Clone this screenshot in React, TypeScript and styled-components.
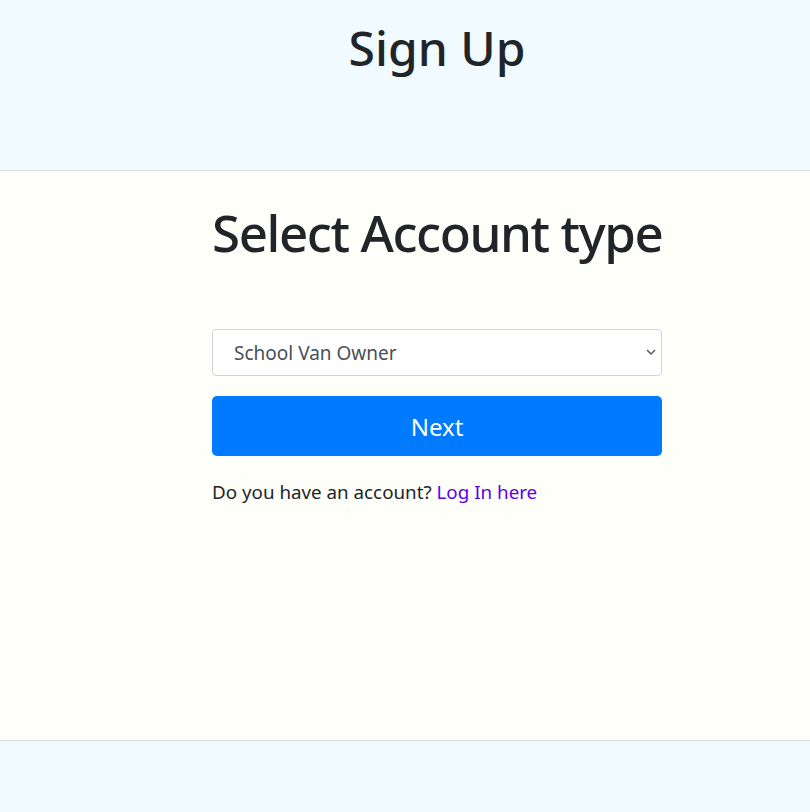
import React from "react";
import styled, { createGlobalStyle } from "styled-components";

const Global = createGlobalStyle`
  html, body { margin: 0; padding: 0; }
  body {
    font-family: "Noto Sans", "Open Sans", "Liberation Sans", sans-serif;
    color: #212529;
    background: #fffffa;
  }
`;

const Page = styled.div`
  display: flex;
  flex-direction: column;
  min-height: 812px;
`;

const Header = styled.header`
  height: 170px;
  background: #f0faff;
  border-bottom: 1px solid #dcdcdc;
  display: flex;
  justify-content: center;
  padding-left: 64px;
  box-sizing: content-box;
`;

const PageTitle = styled.h1`
  margin: 19px 0 0;
  font-size: 48px;
  font-weight: 500;
  line-height: 1.2;
  color: #212529;
`;

const Main = styled.main`
  flex: 1;
  background: #fffffa;
  display: flex;
  flex-direction: column;
  padding-left: 212px;
`;

const Form = styled.form`
  width: 450px;
  display: flex;
  flex-direction: column;
`;

const SectionTitle = styled.h2`
  margin: 31px 0 0;
  font-size: 51px;
  font-weight: 500;
  letter-spacing: -1.4px;
  line-height: 1.2;
  color: #212529;
  white-space: nowrap;
`;

const SelectWrap = styled.div`
  position: relative;
  margin-top: 66px;
`;

const Select = styled.select`
  appearance: none;
  width: 100%;
  height: 47px;
  box-sizing: border-box;
  border: 1px solid #ced4da;
  border-radius: 4px;
  background: #fff;
  padding: 0 30px 0 21px;
  font-family: inherit;
  font-size: 19px;
  color: #495057;
`;

const Chevron = styled.svg`
  position: absolute;
  right: 6px;
  top: 20px;
  pointer-events: none;
`;

const NextButton = styled.button`
  margin-top: 20px;
  height: 60px;
  border: none;
  border-radius: 5px;
  background: #007bff;
  color: #fff;
  font-family: inherit;
  font-size: 24px;
  cursor: pointer;
`;

const Note = styled.p`
  margin: 23px 0 0;
  font-size: 18.8px;
  color: #212529;
`;

const Link = styled.a`
  color: #5a00f0;
  text-decoration: none;
`;

const Footer = styled.footer`
  height: 71px;
  background: #f0faff;
  border-top: 1px solid #dcdcdc;
`;

export default function App() {
  return (
    <Page>
      <Global />
      <Header>
        <PageTitle>Sign Up</PageTitle>
      </Header>
      <Main>
        <Form onSubmit={(e) => e.preventDefault()}>
          <SectionTitle>Select Account type</SectionTitle>
          <SelectWrap>
            <Select defaultValue="owner">
              <option value="owner">School Van Owner</option>
              <option value="parent">Parent</option>
            </Select>
            <Chevron width="10" height="6" viewBox="0 0 10 6">
              <path d="M1 1l4 4 4-4" fill="none" stroke="#555" strokeWidth="1.4" />
            </Chevron>
          </SelectWrap>
          <NextButton type="submit">Next</NextButton>
          <Note>
            Do you have an account? <Link href="#">Log In here</Link>
          </Note>
        </Form>
      </Main>
      <Footer />
    </Page>
  );
}
